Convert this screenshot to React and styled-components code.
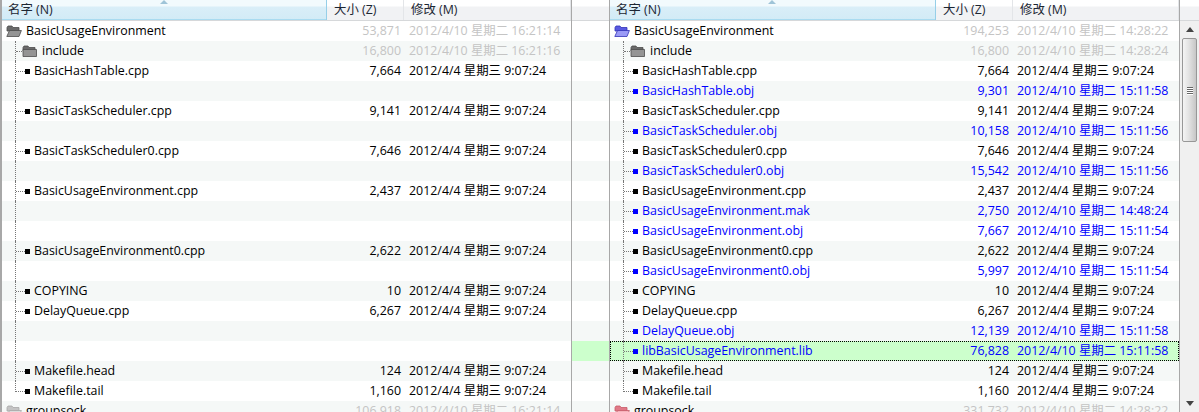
import React from "react";
import styled, { createGlobalStyle } from "styled-components";

const Global = createGlobalStyle`
  html, body { margin: 0; padding: 0; height: 412px; overflow: hidden; background: #fff; }
  #root { height: 412px; overflow: hidden; }
`;

const Frame = styled.div`
  display: grid;
  grid-template-columns: 572px 37px 571px 19px;
  width: 1199px;
  height: 412px;
  overflow: hidden;
  font-family: "Open Sans", "Noto Sans CJK SC", sans-serif;
  font-size: 12.4px;
  color: #000;
`;

const Pane = styled.section`
  box-sizing: border-box;
  min-width: 0;
  border-left: ${(p) => (p.$wide ? "2px" : "1px")} solid #a8a8a8;
  border-right: 1px solid #a8a8a8;
  overflow: hidden;
`;

const Strip = styled.section`
  min-width: 0;
  overflow: hidden;
`;

const Header = styled.header`
  display: grid;
  grid-template-columns: ${(p) => p.$cols};
  height: 21px;
  box-sizing: border-box;
  border-bottom: 1px solid #d6d8da;
  background: linear-gradient(#fff 0, #fff 6px, #f1f2f4 7px, #f1f2f4 100%);
`;

const HeadCell = styled.div`
  position: relative;
  box-sizing: border-box;
  line-height: 20px;
  height: 20px;
  padding-left: ${(p) => (p.$sorted ? "6px" : "7px")};
  color: #1c2633;
  white-space: nowrap;
  border-right: 1px solid ${(p) => (p.$sorted ? "#96cfe8" : "#e3e5e8")};
  background: ${(p) => (p.$sorted ? "linear-gradient(#f2fafd 0, #f2fafd 6px, #d9eef8 7px, #d2ebf6 100%)" : "none")};
  box-shadow: ${(p) => (p.$sorted ? "inset 0 -1px 0 #a9dbf0" : "none")};
`;

const SortArrow = styled.svg`
  position: absolute;
  left: 158px;
  top: 0;
  width: 8px;
  height: 4px;
`;

const Row = styled.div`
  position: relative;
  display: grid;
  grid-template-columns: ${(p) => p.$cols};
  height: 20px;
  line-height: 18px;
  box-sizing: border-box;
  white-space: nowrap;
  background: ${(p) => (p.$selected ? "#ccffcc" : p.$zebra ? "#f5f8f7" : "#fff")};
  color: ${(p) => (p.$tone === "blue" ? "#0000ff" : p.$tone === "dim" ? "#c4c4c4" : "#000")};
  outline: ${(p) => (p.$focus ? "1px dotted #000" : "none")};
  outline-offset: -1px;
`;

const NameCell = styled.div`
  display: flex;
  align-items: flex-start;
  height: 20px;
  padding-left: ${(p) => (p.$root ? "4px" : "13px")};
  overflow: hidden;
  color: inherit;
`;

const Connector = styled.i`
  position: relative;
  flex: none;
  width: ${(p) => (p.$folder ? "7px" : "10px")};
  height: 20px;
  box-sizing: border-box;
  &::before {
    content: "";
    position: absolute;
    left: 0;
    top: 0;
    height: ${(p) => (p.$last ? "11px" : "20px")};
    border-left: 1px dotted #777;
  }
  &::after {
    content: "";
    position: absolute;
    left: 1px;
    top: 10px;
    width: ${(p) => (p.$branch ? (p.$folder ? "6px" : "9px") : "0")};
    border-top: ${(p) => (p.$branch ? "1px dotted #777" : "0")};
  }
`;

const Square = styled.b`
  flex: none;
  width: 5px;
  height: 5px;
  margin: 8px 4px 0 0;
  background: ${(p) => (p.$blue ? "#0000ff" : "#000")};
`;

const FolderBox = styled.svg`
  flex: none;
  width: 16px;
  height: 14px;
  margin: 3px 4px 0 0;
`;

const SizeCell = styled.div`
  text-align: right;
  padding: 1px 3px 0 0;
`;

const DateCell = styled.div`
  padding: 1px 0 0 5px;
`;

const Label = styled.span`
  padding-top: 1px;
  color: ${(p) => (p.$folder ? "#000" : "inherit")};
`;

const Scrollbar = styled.aside`
  display: flex;
  flex-direction: column;
  align-items: center;
  background: #f0f0f0;
  height: 412px;
  box-sizing: border-box;
`;

const ScrollCap = styled.div`
  flex: none;
  align-self: stretch;
  height: 21px;
  box-sizing: border-box;
  background: linear-gradient(#fff 0, #fff 6px, #f1f2f4 7px, #f1f2f4 100%);
  border-bottom: 1px solid #d6d8da;
`;

const ArrowBtn = styled.svg`
  flex: none;
  width: 8px;
  height: 5px;
  margin: ${(p) => (p.$down ? "auto 0 6px" : "6px 0 6px")};
`;

const Thumb = styled.div`
  flex: none;
  box-sizing: border-box;
  width: 15px;
  height: 104px;
  border: 1px solid #979797;
  border-radius: 2px;
  background: linear-gradient(90deg, #f4f4f4, #e2e2e2 45%, #c6c6c6);
  display: flex;
  flex-direction: column;
  justify-content: center;
  align-items: center;
  gap: 1px;
`;

const Grip = styled.span`
  width: 6px;
  height: 1px;
  background: #666;
  box-shadow: 0 1px 0 #fff;
`;

const palette = {
  gray: ["#6a6a6a", "#949494", "#4c4c4c"],
  blue: ["#5a5ae0", "#9a9af6", "#3232b8"],
  red: ["#e07a88", "#f6b4bc", "#c85a68"],
  pale: ["#c4c4c4", "#dcdcdc", "#a8a8a8"],
};

const Icon = ({ color, root }) => {
  const c = palette[color];
  return (
    <FolderBox viewBox="0 0 16 14">
      <path d="M1 3.5 L2 2 H6 L7 3.5 H13 V7 H1 Z" fill={c[0]} stroke={c[2]} strokeWidth="0.8" />
      {root ? (
        <path d="M0.8 12.5 L3.5 6.5 H15.4 L13 12.5 Z" fill={c[1]} stroke={c[2]} strokeWidth="0.8" />
      ) : (
        <path d="M1 5.5 H14.5 V12.5 H1 Z" fill={c[1]} stroke={c[2]} strokeWidth="0.8" />
      )}
    </FolderBox>
  );
};

const rows = [
  { n: "BasicUsageEnvironment", f: "root", lc: "gray", l: ["53,871", "2012/4/10 星期二 16:21:14"], r: ["194,253", "2012/4/10 星期二 14:28:22"], rc: "blue" },
  { n: "include", f: "sub", lc: "gray", l: ["16,800", "2012/4/10 星期二 16:21:16"], r: ["16,800", "2012/4/10 星期二 14:28:24"], rc: "gray" },
  { n: "BasicHashTable.cpp", l: ["7,664", "2012/4/4 星期三 9:07:24"], r: ["7,664", "2012/4/4 星期三 9:07:24"] },
  { n: "BasicHashTable.obj", b: 1, r: ["9,301", "2012/4/10 星期二 15:11:58"] },
  { n: "BasicTaskScheduler.cpp", l: ["9,141", "2012/4/4 星期三 9:07:24"], r: ["9,141", "2012/4/4 星期三 9:07:24"] },
  { n: "BasicTaskScheduler.obj", b: 1, r: ["10,158", "2012/4/10 星期二 15:11:56"] },
  { n: "BasicTaskScheduler0.cpp", l: ["7,646", "2012/4/4 星期三 9:07:24"], r: ["7,646", "2012/4/4 星期三 9:07:24"] },
  { n: "BasicTaskScheduler0.obj", b: 1, r: ["15,542", "2012/4/10 星期二 15:11:56"] },
  { n: "BasicUsageEnvironment.cpp", l: ["2,437", "2012/4/4 星期三 9:07:24"], r: ["2,437", "2012/4/4 星期三 9:07:24"] },
  { n: "BasicUsageEnvironment.mak", b: 1, r: ["2,750", "2012/4/10 星期二 14:48:24"] },
  { n: "BasicUsageEnvironment.obj", b: 1, r: ["7,667", "2012/4/10 星期二 15:11:54"] },
  { n: "BasicUsageEnvironment0.cpp", l: ["2,622", "2012/4/4 星期三 9:07:24"], r: ["2,622", "2012/4/4 星期三 9:07:24"] },
  { n: "BasicUsageEnvironment0.obj", b: 1, r: ["5,997", "2012/4/10 星期二 15:11:54"] },
  { n: "COPYING", l: ["10", "2012/4/4 星期三 9:07:24"], r: ["10", "2012/4/4 星期三 9:07:24"] },
  { n: "DelayQueue.cpp", l: ["6,267", "2012/4/4 星期三 9:07:24"], r: ["6,267", "2012/4/4 星期三 9:07:24"] },
  { n: "DelayQueue.obj", b: 1, r: ["12,139", "2012/4/10 星期二 15:11:58"] },
  { n: "libBasicUsageEnvironment.lib", b: 1, sel: 1, r: ["76,828", "2012/4/10 星期二 15:11:58"] },
  { n: "Makefile.head", l: ["124", "2012/4/4 星期三 9:07:24"], r: ["124", "2012/4/4 星期三 9:07:24"] },
  { n: "Makefile.tail", last: 1, l: ["1,160", "2012/4/4 星期三 9:07:24"], r: ["1,160", "2012/4/4 星期三 9:07:24"] },
  { n: "groupsock", f: "root", lc: "pale", l: ["106,918", "2012/4/10 星期二 16:21:14"], r: ["331,732", "2012/4/10 星期二 14:28:22"], rc: "red" },
];

const HEAD_LEFT = "325px 77px 1fr";
const ROW_LEFT = "325px 77px 1fr";
const HEAD_RIGHT = "326px 77px 1fr";
const ROW_RIGHT = "326px 76px 1fr";

const Head = ({ cols }) => (
  <Header $cols={cols}>
    <HeadCell $sorted>
      名字 (N)
      <SortArrow viewBox="0 0 8 4">
        <path d="M4 0 L8 4 H0 Z" fill="#9fc4d8" />
      </SortArrow>
    </HeadCell>
    <HeadCell>大小 (Z)</HeadCell>
    <HeadCell>修改 (M)</HeadCell>
  </Header>
);

const FileRow = ({ r, i, side, cols }) => {
  const data = side === "l" ? r.l : r.r;
  const isFolder = !!r.f;
  const tone = !data ? "" : isFolder ? "dim" : r.b ? "blue" : "";
  const rootRow = r.f === "root";
  return (
    <Row $cols={cols} $zebra={i % 2 === 1} $tone={tone} $selected={side === "r" && r.sel} $focus={side === "r" && r.sel}>
      <NameCell $root={rootRow}>
        {!rootRow && <Connector $last={r.last} $branch={!!data} $folder={r.f === "sub"} />}
        {isFolder && <Icon root={rootRow} color={side === "r" ? r.rc : r.lc} />}
        {data && !isFolder && <Square $blue={r.b} />}
        {data && <Label $folder={isFolder}>{r.n}</Label>}
      </NameCell>
      {data && <SizeCell>{data[0]}</SizeCell>}
      {data && <DateCell>{data[1]}</DateCell>}
    </Row>
  );
};

export default function App() {
  return (
    <Frame>
      <Global />
      <Pane $wide>
        <Head cols={HEAD_LEFT} />
        {rows.map((r, i) => (
          <FileRow key={r.n} r={r} i={i} side="l" cols={ROW_LEFT} />
        ))}
      </Pane>
      <Strip>
        <Header $cols="1fr" />
        {rows.map((r, i) => (
          <Row key={r.n} $cols="1fr" $zebra={i % 2 === 1} $selected={r.sel} />
        ))}
      </Strip>
      <Pane>
        <Head cols={HEAD_RIGHT} />
        {rows.map((r, i) => (
          <FileRow key={r.n} r={r} i={i} side="r" cols={ROW_RIGHT} />
        ))}
      </Pane>
      <Scrollbar>
        <ScrollCap />
        <ArrowBtn viewBox="0 0 8 5">
          <path d="M4 0 L8 5 H0 Z" fill="#444" />
        </ArrowBtn>
        <Thumb>
          <Grip />
          <Grip />
          <Grip />
          <Grip />
        </Thumb>
        <ArrowBtn $down viewBox="0 0 8 5">
          <path d="M0 0 H8 L4 5 Z" fill="#444" />
        </ArrowBtn>
      </Scrollbar>
    </Frame>
  );
}
